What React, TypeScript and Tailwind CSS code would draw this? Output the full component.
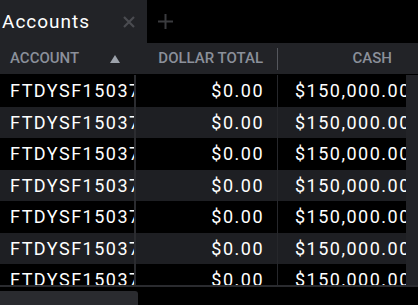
import React from "react";

const rows = Array.from({ length: 7 }, () => ({
  account: "FTDYSF150371",
  total: "$0.00",
  cash: "$150,000.00",
}));

export default function App() {
  return (
    <div
      className="flex h-[305px] w-[418px] flex-col overflow-hidden bg-black"
      style={{ fontFamily: "Roboto, 'Liberation Sans', sans-serif" }}
    >
      {/* tabs */}
      <div className="flex h-[43px] shrink-0 items-stretch">
        <div className="flex w-[147px] items-center justify-between bg-[#222327] pl-[2px] pr-[12px]">
          <span className="text-[19px] leading-none tracking-[1px] text-white">Accounts</span>
          <svg width="12" height="12" viewBox="0 0 12 12">
            <path d="M1 1L11 11M11 1L1 11" stroke="#4a4b50" strokeWidth="2.2" />
          </svg>
        </div>
        <div className="flex w-[36px] items-center justify-center">
          <svg width="15" height="15" viewBox="0 0 15 15">
            <path d="M7.5 0V15M0 7.5H15" stroke="#3a3b3e" strokeWidth="2" />
          </svg>
        </div>
      </div>

      {/* header */}
      <div className="flex h-[31px] shrink-0 items-center bg-[#222327] text-[15px] font-medium uppercase text-[#8b909a]">
        <div className="flex w-[136px] items-center pl-[10px]">
          <span>Account</span>
          <svg width="10" height="8" viewBox="0 0 10 8" className="ml-[31px]">
            <path d="M5 0L10 8H0Z" fill="#9da2ab" />
          </svg>
        </div>
        <div className="w-[141px] pr-[14px] text-right">Dollar Total</div>
        <div className="h-[22px] w-px bg-[#55575d]" />
        <div className="w-[128px] pr-[14px] text-right">Cash</div>
      </div>

      {/* body */}
      <div className="mt-px flex h-[210px] shrink-0">
        <div className="w-[406px] overflow-hidden">
          {rows.map((r, i) => (
            <div
              key={i}
              className={`flex h-[31.5px] items-center text-[18px] tracking-[1.5px] text-white ${
                i % 2 === 1 ? "bg-[#1e1f23]" : "bg-black"
              }`}
            >
              <div className="flex h-full w-[134px] items-center overflow-hidden whitespace-nowrap pl-[10px]">
                {r.account}
              </div>
              <div className="h-full w-[2px] bg-[#2b2c30]" />
              <div className="w-[141px] pr-[13px] text-right">{r.total}</div>
              <div className="h-full w-px bg-[#26272b]" />
              <div className="flex h-full w-[128px] items-center overflow-hidden whitespace-nowrap pl-[17px]">
                {r.cash}
              </div>
            </div>
          ))}
        </div>
        <div className="w-[12px] bg-[#222327]" />
      </div>

      <div className="h-[2px] shrink-0 bg-[#2a2b2f]" />
      <div className="mt-[4px] h-[14px] w-[138px] shrink-0 rounded-tr-[3px] bg-[#2a2b2f]" />
    </div>
  );
}
